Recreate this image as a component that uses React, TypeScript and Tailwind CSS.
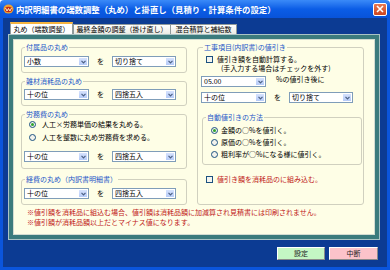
import React from "react";

function Combo({ value, w }: { value: string; w: string }) {
  return (
    <div className={`flex h-[11px] shrink-0 items-center border border-[#7f9db9] bg-white ${w}`}>
      <span className="flex-1 pl-[2px] text-[7px] leading-none text-black">{value}</span>
      <span className="flex h-full w-[10px] items-center justify-center border border-white bg-linear-to-b from-[#d6e2fd] to-[#b6cbf8]">
        <svg width="5" height="4" viewBox="0 0 5 4">
          <path d="M0.5 0.8 L2.5 2.8 L4.5 0.8" fill="none" stroke="#4d6185" strokeWidth="1.2" />
        </svg>
      </span>
    </div>
  );
}

function Radio({ checked }: { checked?: boolean }) {
  return (
    <span className="flex h-[7px] w-[7px] shrink-0 items-center justify-center rounded-full border border-[#1c5180] bg-[#f2f2ec]">
      {checked && <span className="h-[3px] w-[3px] rounded-full bg-[#2ea52e]" />}
    </span>
  );
}

function Check() {
  return <span className="h-[7px] w-[7px] shrink-0 border border-[#1c5180] bg-[#f4f4ee]" />;
}

function Wo() {
  return <span className="w-[23px] shrink-0 text-center text-[7px] leading-none text-black">を</span>;
}

export default function App() {
  return (
    <div className="flex h-[270px] w-[390px] flex-col overflow-hidden font-['Noto_Sans_CJK_JP',sans-serif]">
      {/* title bar */}
      <div className="flex h-[18px] shrink-0 items-center rounded-t-[4px] bg-linear-to-b from-[#3a8af8] via-[#0b5de6] to-[#0853da] pl-[3px] pr-[3px]">
        <svg width="11" height="10" viewBox="0 0 11 10">
          <ellipse cx="5.5" cy="5" rx="5" ry="4.5" fill="#f0a030" />
          <ellipse cx="5.5" cy="5.5" rx="3.6" ry="2.8" fill="#c02818" />
          <path d="M2.5 4 L4 7 L5.5 4.5 L7 7 L8.5 4" fill="none" stroke="#fff3c0" strokeWidth="1" />
        </svg>
        <span className="ml-[2px] text-[8.4px] font-bold leading-none text-white">
          内訳明細書の端数調整（丸め）と掛直し（見積り・計算条件の設定）
        </span>
        <div className="ml-auto flex h-[13px] w-[14px] items-center justify-center rounded-[2px] border border-white bg-linear-to-b from-[#e9774f] to-[#cc4520]">
          <svg width="8" height="8" viewBox="0 0 8 8">
            <path d="M1 1 L7 7 M7 1 L1 7" stroke="white" strokeWidth="1.6" />
          </svg>
        </div>
      </div>

      {/* window body */}
      <div className="flex flex-1 flex-col border-x-[3px] border-b-[3px] border-[#0b55dc] bg-[#0c3b93] pl-[5px] pr-[7px] pt-[4px]">
        {/* tabs */}
        <div className="flex h-[12px] items-end pl-[2px] text-[7px] leading-none text-black">
          <div className="flex h-[12px] w-[63px] items-center justify-center border-x border-t-[2px] border-x-[#919b9c] border-t-[#f5b340] bg-white">
            丸め（端数調整）
          </div>
          <div className="flex h-[10px] w-[98px] items-center justify-center border-x border-t border-[#919b9c] bg-linear-to-b from-white to-[#ecebe4]">
            最終金額の調整（掛け直し）
          </div>
          <div className="flex h-[10px] w-[66px] items-center justify-center border-r border-t border-[#919b9c] bg-linear-to-b from-white to-[#ecebe4]">
            混合積算と補給数
          </div>
        </div>

        {/* panel */}
        <div className="h-[206px] border border-[#aac3c5]">
          <div className="h-full border-4 border-[#3b7b7d]">
            <div className="flex h-full flex-col border border-[#d3dcd2] bg-[#fefee6] pl-[7px] pt-[3px] text-[7px] leading-none text-black">
              <div className="flex">
                {/* left column */}
                <div className="flex w-[166px] flex-col">
                  <fieldset className="rounded-[3px] border border-[#d0d0bf] pb-[5px] pl-[2px] pt-[5px]">
                    <legend className="ml-[1px] px-[1px] leading-[8px] text-[#2457c8]">付属品の丸め</legend>
                    <div className="flex items-center">
                      <Combo value="小数" w="w-[65px]" />
                      <Wo />
                      <Combo value="切り捨て" w="w-[64px]" />
                    </div>
                  </fieldset>
                  <fieldset className="mt-[4px] rounded-[3px] border border-[#d0d0bf] pb-[5px] pl-[2px] pt-[4px]">
                    <legend className="ml-[1px] px-[1px] leading-[8px] text-[#2457c8]">雑材消耗品の丸め</legend>
                    <div className="flex items-center">
                      <Combo value="十の位" w="w-[65px]" />
                      <Wo />
                      <Combo value="四捨五入" w="w-[64px]" />
                    </div>
                  </fieldset>
                  <fieldset className="mt-[4px] rounded-[3px] border border-[#d0d0bf] pb-[6px] pl-[2px]">
                    <legend className="ml-[1px] px-[1px] leading-[8px] text-[#2457c8]">労務費の丸め</legend>
                    <div className="flex h-[13px] items-center pl-[5px]">
                      <Radio checked />
                      <span className="ml-[6px]">人工×労務単価の結果を丸める。</span>
                    </div>
                    <div className="flex h-[13px] items-center pl-[5px]">
                      <Radio />
                      <span className="ml-[6px]">人工を整数に丸め労務費を求める。</span>
                    </div>
                    <div className="mt-[7px] flex items-center">
                      <Combo value="十の位" w="w-[65px]" />
                      <Wo />
                      <Combo value="四捨五入" w="w-[64px]" />
                    </div>
                  </fieldset>
                  <fieldset className="mt-[6px] rounded-[3px] border border-[#d0d0bf] pb-[5px] pl-[2px] pt-[5px]">
                    <legend className="ml-[1px] px-[1px] leading-[8px] text-[#2457c8]">経費の丸め（内訳書明細書）</legend>
                    <div className="flex items-center">
                      <Combo value="十の位" w="w-[65px]" />
                      <Wo />
                      <Combo value="四捨五入" w="w-[64px]" />
                    </div>
                  </fieldset>
                </div>

                {/* right column */}
                <fieldset className="ml-[10px] w-[167px] rounded-[3px] border border-[#d0d0bf] pb-[19px] pl-[3px] pt-[3px]">
                  <legend className="ml-[2px] px-[1px] leading-[8px] text-[#2457c8]">工事項目(内訳書)の値引き</legend>
                  <div className="flex h-[10px] items-center pl-[5px]">
                    <Check />
                    <span className="ml-[4px]">値引き額を自動計算する。</span>
                  </div>
                  <div className="flex h-[9px] items-center pl-[20px]">(手入力する場合はチェックを外す)</div>
                  <div className="mt-[3px] flex">
                    <Combo value="05.00" w="w-[65px]" />
                    <span className="ml-[10px] self-start leading-[7px]">%の値引き後に</span>
                  </div>
                  <div className="mt-[5px] flex items-center">
                    <Combo value="十の位" w="w-[65px]" />
                    <Wo />
                    <Combo value="切り捨て" w="w-[64px]" />
                  </div>
                  <fieldset className="ml-[1px] mt-[10px] w-[160px] rounded-[3px] border border-[#d0d0bf] pb-[4px] pl-[3px] pt-[3px]">
                    <legend className="px-[1px] leading-[8px] text-[#2457c8]">自動値引きの方法</legend>
                    <div className="flex h-[12px] items-center pl-[5px]">
                      <Radio checked />
                      <span className="ml-[3px]">金額の○%を値引く。</span>
                    </div>
                    <div className="flex h-[12px] items-center pl-[5px]">
                      <Radio />
                      <span className="ml-[3px]">原価の○%を値引く。</span>
                    </div>
                    <div className="flex h-[12px] items-center pl-[5px]">
                      <Radio />
                      <span className="ml-[3px]">粗利率が○%になる様に値引く。</span>
                    </div>
                  </fieldset>
                  <div className="mt-[9px] flex h-[10px] items-center pl-[5px]">
                    <Check />
                    <span className="ml-[4px] text-[#c01818]">値引き額を消耗品のに組み込む。</span>
                  </div>
                </fieldset>
              </div>

              {/* notes */}
              <div className="mt-[2px] pl-[6px] leading-[10px] text-[#c01818]">
                <p>※値引額を消耗品に組込む場合、値引額は消耗品額に加減算され見積書には印刷されません。</p>
                <p>※値引額が消耗品額以上だとマイナス値になります。</p>
              </div>
            </div>
          </div>
        </div>

        {/* buttons */}
        <div className="mt-[7px] flex justify-end gap-[4px] pr-[2px] text-[7px] leading-none">
          <button className="flex h-[13px] w-[48px] items-center justify-center border border-b-[#8a8a8a] border-l-white border-r-[#8a8a8a] border-t-white bg-[#c4f6c4] text-[#222]">
            設定
          </button>
          <button className="flex h-[13px] w-[49px] items-center justify-center border border-b-[#8a8a8a] border-l-white border-r-[#8a8a8a] border-t-white bg-[#fcc3ca] text-[#222]">
            中断
          </button>
        </div>
      </div>
    </div>
  );
}
